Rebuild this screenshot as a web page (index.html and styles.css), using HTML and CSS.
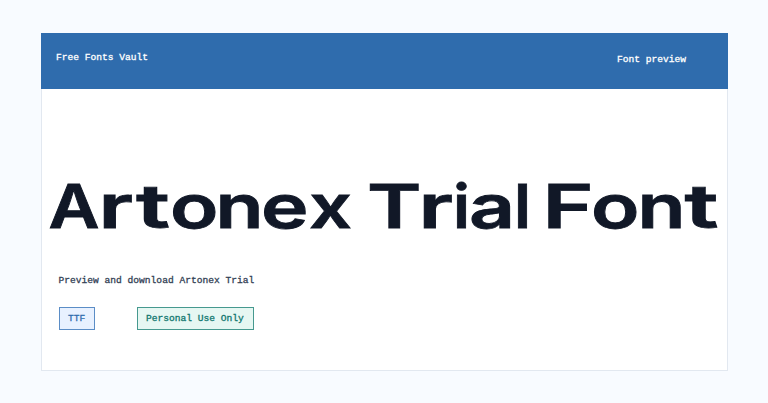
FILE: index.html
```
<!DOCTYPE html>
<html lang="en">
  <head>
    <meta charset="UTF-8" />
    <meta name="viewport" content="width=device-width, initial-scale=1.0" />
    <title>Artonex Trial Font</title>
    <link rel="stylesheet" href="styles.css">
  </head>

  <body>
    <main class="card">
      <header>
        <span class="brand">Free Fonts Vault</span>
        <span class="label">Font preview</span>
      </header>

      <h1>
        <svg class="specimen" viewBox="0 0 685 90" role="img" aria-label="Artonex Trial Font">
          <text y="67.5">
            <tspan x="6.5" textLength="51" lengthAdjust="spacingAndGlyphs">A</tspan><tspan x="56.5" textLength="34.5" lengthAdjust="spacingAndGlyphs">r</tspan><tspan x="94" textLength="34" lengthAdjust="spacingAndGlyphs">t</tspan><tspan x="128" textLength="48.5" lengthAdjust="spacingAndGlyphs">o</tspan><tspan x="173.5" textLength="48" lengthAdjust="spacingAndGlyphs">n</tspan><tspan x="219" textLength="47.5" lengthAdjust="spacingAndGlyphs">e</tspan><tspan x="267" textLength="43" lengthAdjust="spacingAndGlyphs">x</tspan>
            <tspan x="325" textLength="54.5" lengthAdjust="spacingAndGlyphs">T</tspan><tspan x="376.5" textLength="34.5" lengthAdjust="spacingAndGlyphs">r</tspan><tspan x="411" textLength="17" lengthAdjust="spacingAndGlyphs">i</tspan><tspan x="427" textLength="46" lengthAdjust="spacingAndGlyphs">a</tspan><tspan x="472" textLength="17" lengthAdjust="spacingAndGlyphs">l</tspan>
            <tspan x="500.5" textLength="51" lengthAdjust="spacingAndGlyphs">F</tspan><tspan x="549" textLength="48.5" lengthAdjust="spacingAndGlyphs">o</tspan><tspan x="595.5" textLength="48" lengthAdjust="spacingAndGlyphs">n</tspan><tspan x="642.5" textLength="34" lengthAdjust="spacingAndGlyphs">t</tspan>
          </text>
        </svg>
      </h1>

      <p>Preview and download Artonex Trial</p>

      <div class="tags">
        <span class="tag format">TTF</span>
        <span class="tag license">Personal Use Only</span>
      </div>
    </main>
  </body>
</html>
```
FILE: styles.css
```
* {
  box-sizing: border-box;
}
body {
  margin: 0;
  padding: 33px 40px 32px 41px;
  height: 403px;
  background-color: #f8fbff;
  font-family: "Liberation Mono", monospace;
  font-size: 9.6px;
  line-height: 12px;
  -webkit-text-stroke: 0.3px;
}
.card {
  height: 338px;
  background-color: #ffffff;
  border: 1px solid #e2e8f0;
}
header {
  display: flex;
  justify-content: space-between;
  height: 56px;
  margin: -1px -1px 0;
  padding: 19px 42px 0 15px;
  background-color: #2f6cad;
  color: #ffffff;
}
.label {
  margin-top: 2px;
}
h1 {
  margin: 71px 0 0;
  height: 90px;
}
.specimen {
  display: block;
  width: 685px;
  height: 90px;
  fill: #111827;
  stroke: #111827;
  stroke-width: 0.8px;
  font-family: Inter, sans-serif;
  font-size: 60px;
  font-weight: 600;
  -webkit-text-stroke: 0;
}
p {
  margin: 25px 0 0 16.5px;
  color: #334155;
}
.tags {
  display: flex;
  gap: 42px;
  margin: 20px 0 0 17px;
}
.tag {
  height: 23px;
  padding: 5px 8px;
  border: 1px solid;
}
.format {
  width: 36px;
  color: #2f6cad;
  background-color: #e8f1ff;
  border-color: #5b8dc6;
}
.license {
  width: 117px;
  color: #0f766e;
  background-color: #e6f7f2;
  border-color: #46998f;
}
```
